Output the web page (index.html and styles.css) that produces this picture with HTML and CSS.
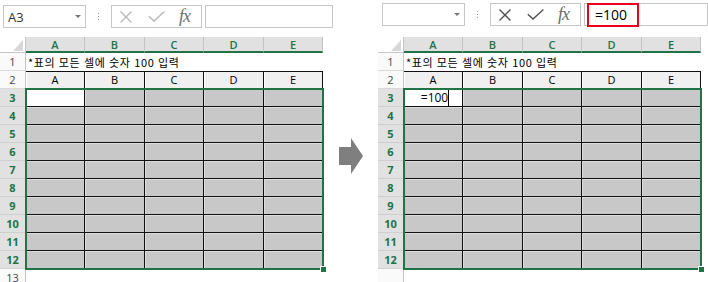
FILE: index.html
```html
<!DOCTYPE html>
<html lang="ko">
<head>
    <meta charset="UTF-8">
    <title>셀 입력</title>
    <link rel="stylesheet" href="styles.css">
</head>
<body>
<div class="page">
    <!-- before -->
    <div class="panel">
        <div class="toolbar">
            <div class="namebox"><span>A3</span><span class="caret"></span></div>
            <div class="grip"><i></i><i></i><i></i></div>
            <div class="fxbox">
                <svg class="ic-x" width="12" height="12" viewBox="0 0 12 12"><path d="M0.5 0.5L11.5 11.5M11.5 0.5L0.5 11.5"/></svg>
                <svg class="ic-ok" width="17" height="11" viewBox="0 0 17 11"><path d="M0.8 5.2L6 10L16.4 0.6"/></svg>
                <span class="fx">fx</span>
            </div>
            <div class="formula"></div>
        </div>
        <div class="sheet">
            <div class="row head">
                <div class="rh corner"></div>
                <div class="c ch">A</div><div class="c ch">B</div><div class="c ch">C</div><div class="c ch">D</div><div class="c ch">E</div>
            </div>
            <div class="row"><div class="rh">1</div><div class="note">*표의 모든 셀에 숫자 100 입력</div></div>
            <div class="row"><div class="rh">2</div><div class="c h2">A</div><div class="c h2">B</div><div class="c h2">C</div><div class="c h2">D</div><div class="c h2">E</div></div>
            <div class="row"><div class="rh sel">3</div><div class="c d active"></div><div class="c d"></div><div class="c d"></div><div class="c d"></div><div class="c d"></div></div>
            <div class="row"><div class="rh sel">4</div><div class="c d"></div><div class="c d"></div><div class="c d"></div><div class="c d"></div><div class="c d"></div></div>
            <div class="row"><div class="rh sel">5</div><div class="c d"></div><div class="c d"></div><div class="c d"></div><div class="c d"></div><div class="c d"></div></div>
            <div class="row"><div class="rh sel">6</div><div class="c d"></div><div class="c d"></div><div class="c d"></div><div class="c d"></div><div class="c d"></div></div>
            <div class="row"><div class="rh sel">7</div><div class="c d"></div><div class="c d"></div><div class="c d"></div><div class="c d"></div><div class="c d"></div></div>
            <div class="row"><div class="rh sel">8</div><div class="c d"></div><div class="c d"></div><div class="c d"></div><div class="c d"></div><div class="c d"></div></div>
            <div class="row"><div class="rh sel">9</div><div class="c d"></div><div class="c d"></div><div class="c d"></div><div class="c d"></div><div class="c d"></div></div>
            <div class="row"><div class="rh sel">10</div><div class="c d"></div><div class="c d"></div><div class="c d"></div><div class="c d"></div><div class="c d"></div></div>
            <div class="row"><div class="rh sel">11</div><div class="c d"></div><div class="c d"></div><div class="c d"></div><div class="c d"></div><div class="c d"></div></div>
            <div class="row"><div class="rh sel">12</div><div class="c d"></div><div class="c d"></div><div class="c d"></div><div class="c d"></div><div class="c d"></div></div>
            <div class="row"><div class="rh">13</div></div>
            <div class="selection"></div>
            <div class="handle"></div>
        </div>
    </div>

    <div class="arrow">
        <svg width="24" height="36" viewBox="0 0 24 36"><polygon points="0,9 12,9 12,0 24,18 12,36 12,27 0,27"/></svg>
    </div>

    <!-- after -->
    <div class="panel panel-after">
        <div class="toolbar">
            <div class="namebox"><span></span><span class="caret"></span></div>
            <div class="grip"><i></i><i></i><i></i></div>
            <div class="fxbox">
                <svg class="ic-x" width="12" height="12" viewBox="0 0 12 12"><path d="M0.5 0.5L11.5 11.5M11.5 0.5L0.5 11.5"/></svg>
                <svg class="ic-ok" width="17" height="11" viewBox="0 0 17 11"><path d="M0.8 5.2L6 10L16.4 0.6"/></svg>
                <span class="fx">fx</span>
            </div>
            <div class="formula"><span class="mark">=100</span></div>
        </div>
        <div class="sheet">
            <div class="row head">
                <div class="rh corner"></div>
                <div class="c ch">A</div><div class="c ch">B</div><div class="c ch">C</div><div class="c ch">D</div><div class="c ch">E</div>
            </div>
            <div class="row"><div class="rh">1</div><div class="note">*표의 모든 셀에 숫자 100 입력</div></div>
            <div class="row"><div class="rh">2</div><div class="c h2">A</div><div class="c h2">B</div><div class="c h2">C</div><div class="c h2">D</div><div class="c h2">E</div></div>
            <div class="row"><div class="rh sel">3</div><div class="c d active"><span class="typing">=100</span></div><div class="c d"></div><div class="c d"></div><div class="c d"></div><div class="c d"></div></div>
            <div class="row"><div class="rh sel">4</div><div class="c d"></div><div class="c d"></div><div class="c d"></div><div class="c d"></div><div class="c d"></div></div>
            <div class="row"><div class="rh sel">5</div><div class="c d"></div><div class="c d"></div><div class="c d"></div><div class="c d"></div><div class="c d"></div></div>
            <div class="row"><div class="rh sel">6</div><div class="c d"></div><div class="c d"></div><div class="c d"></div><div class="c d"></div><div class="c d"></div></div>
            <div class="row"><div class="rh sel">7</div><div class="c d"></div><div class="c d"></div><div class="c d"></div><div class="c d"></div><div class="c d"></div></div>
            <div class="row"><div class="rh sel">8</div><div class="c d"></div><div class="c d"></div><div class="c d"></div><div class="c d"></div><div class="c d"></div></div>
            <div class="row"><div class="rh sel">9</div><div class="c d"></div><div class="c d"></div><div class="c d"></div><div class="c d"></div><div class="c d"></div></div>
            <div class="row"><div class="rh sel">10</div><div class="c d"></div><div class="c d"></div><div class="c d"></div><div class="c d"></div><div class="c d"></div></div>
            <div class="row"><div class="rh sel">11</div><div class="c d"></div><div class="c d"></div><div class="c d"></div><div class="c d"></div><div class="c d"></div></div>
            <div class="row"><div class="rh sel">12</div><div class="c d"></div><div class="c d"></div><div class="c d"></div><div class="c d"></div><div class="c d"></div></div>
            <div class="row"><div class="rh"></div></div>
            <div class="selection"></div>
            <div class="handle"></div>
        </div>
    </div>
</div>
</body>
</html>
```

FILE: styles.css
```css
body {
    margin: 0;
    font-family: "Open Sans", "Noto Sans", sans-serif;
    color: #000;
}

.page {
    display: flex;
    width: 708px;
    height: 282px;
    overflow: hidden;
    background: #fff;
}

.panel {
    flex: none;
    width: 333px;
    overflow: hidden;
}

.panel-after {
    width: 330px;
}

/* formula bar */
.toolbar {
    display: flex;
    height: 37px;
    padding: 5px 0 0 3px;
    box-sizing: border-box;
}

.panel-after .toolbar {
    padding: 3px 0 0 4px;
}

.namebox,
.fxbox,
.formula {
    height: 23px;
    border: 1px solid #c6c6c6;
    box-sizing: border-box;
    background: #fff;
}

.namebox {
    display: flex;
    align-items: center;
    justify-content: space-between;
    width: 83px;
    padding: 0 4px 0 4px;
    font-size: 13px;
    color: #333;
}

.caret {
    width: 0;
    height: 0;
    border-left: 3px solid transparent;
    border-right: 3px solid transparent;
    border-top: 3px solid #777;
}

.grip {
    display: flex;
    flex-direction: column;
    align-items: center;
    gap: 2px;
    width: 25px;
    padding-top: 8px;
    box-sizing: border-box;
}

.grip i {
    width: 1px;
    height: 1px;
    background: #9a9a9a;
}

.fxbox {
    display: flex;
    align-items: center;
    width: 91px;
    padding-left: 8px;
}

.fxbox svg {
    fill: none;
    stroke: #b8b8b8;
    stroke-width: 1.4;
}

.ic-ok {
    margin-left: 16px;
    stroke-width: 2;
}

.panel-after .fxbox svg {
    stroke: #505050;
}

.fx {
    margin-left: 14px;
    font: italic 18px "Liberation Serif", serif;
    color: #6e6e6e;
    letter-spacing: -1px;
}

.formula {
    flex: 1;
    margin-left: 3px;
}

.mark {
    display: block;
    width: 52px;
    height: 24px;
    margin: -1px 0 0 2px;
    padding-left: 6px;
    border: 2px solid #e8001c;
    box-sizing: border-box;
    font: 14px/20px "Open Sans", sans-serif;
}

/* worksheet */
.sheet {
    position: relative;
    font-size: 11px;
}

.row {
    display: flex;
    height: 18px;
}

.row.head {
    height: 16px;
}

.rh {
    flex: none;
    width: 26px;
    box-sizing: border-box;
    border-right: 1px solid #c6c6c6;
    border-bottom: 1px solid #dadada;
    background: #fafafa;
    text-align: center;
    line-height: 17px;
    color: #444;
}

.rh.sel {
    background: #e1e1e1;
    border-bottom-color: #cfcfcf;
    border-right-color: #217346;
    color: #217346;
    font-weight: 700;
}

.corner {
    display: flex;
    align-items: flex-end;
    justify-content: flex-end;
    padding: 0 2px 1px 0;
    background: #fff;
    border-bottom-color: #c6c6c6;
}

.corner::after {
    content: "";
    border-left: 10px solid transparent;
    border-bottom: 11px solid #d8d8d8;
}

.c {
    flex: none;
    width: 59px;
    box-sizing: border-box;
    text-align: center;
}

.c:nth-child(3),
.c:nth-child(5) {
    width: 60px;
}

.ch {
    background: #e1e1e1;
    border-right: 1px solid #c4c4c4;
    border-bottom: 2px solid #217346;
    line-height: 15px;
    color: #217346;
    font-weight: 600;
}

.note {
    padding-left: 2px;
    white-space: nowrap;
    font: 11px/18px "Noto Sans CJK KR", sans-serif;
    letter-spacing: 0.6px;
}

.h2 {
    background: #f0f0f0;
    border-top: 1px solid #111;
    border-right: 1px solid #111;
    box-shadow: inset 1px 0 0 #fff;
    line-height: 16px;
}

.d {
    background: #c8c8c8;
    border-right: 1px solid #111;
    border-bottom: 1px solid #111;
    box-shadow: inset 1px 1px 0 #dcdcdc;
}

.d.active {
    background: #fff;
    box-shadow: none;
    line-height: 18px;
    font-size: 12px;
}

.typing {
    margin-left: 4px;
    border-right: 1px solid #000;
}

.selection {
    position: absolute;
    left: 25px;
    top: 51px;
    width: 299px;
    height: 182px;
    border: 2px solid #217346;
    box-sizing: border-box;
}

.handle {
    position: absolute;
    left: 320px;
    top: 229px;
    width: 5px;
    height: 5px;
    background: #217346;
    border: 1px solid #fff;
}

.arrow {
    flex: none;
    width: 45px;
    padding: 138px 0 0 6px;
    box-sizing: border-box;
}

.arrow svg {
    display: block;
    fill: #7f7f7f;
}
```
